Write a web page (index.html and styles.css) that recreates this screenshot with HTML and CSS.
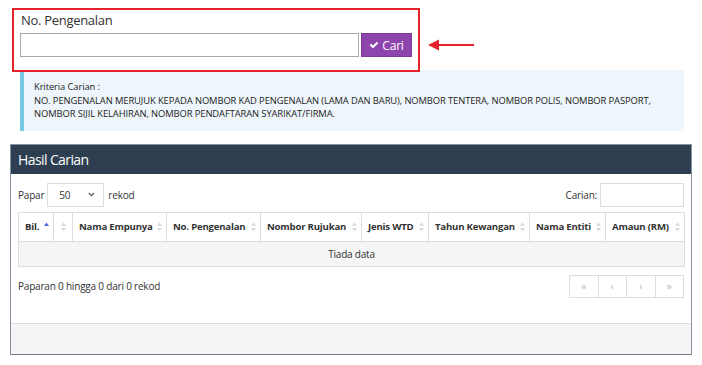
FILE: index.html
```html
<!DOCTYPE html>
<html>
<head>
    <title>Carian</title>
    <link rel="stylesheet" href="styles.css">
</head>
<body>

    <div class="search-row">
        <div class="search-box">
            <label class="search-label">No. Pengenalan</label>
            <div class="search-fields">
                <input type="text" class="search-input">
                <button class="btn-cari">
                    <svg width="10" height="10" viewBox="0 0 12 12"><path d="M0.8 6.4 L2.6 4.6 L4.7 6.7 L9.4 2 L11.2 3.8 L4.7 10.3 Z" fill="#fff"/></svg>
                    Cari
                </button>
            </div>
        </div>
        <svg class="arrow" width="50" height="12" viewBox="0 0 50 12">
            <path d="M0 6 L11 0.5 L11 11.5 Z" fill="#e2232b"/>
            <rect x="9" y="5" width="37" height="2" fill="#e2232b"/>
        </svg>
    </div>

    <div class="info-box">
        <div>Kriteria Carian :</div>
        <div>NO. PENGENALAN MERUJUK KEPADA NOMBOR KAD PENGENALAN (LAMA DAN BARU), NOMBOR TENTERA, NOMBOR POLIS, NOMBOR PASPORT, NOMBOR SIJIL KELAHIRAN, NOMBOR PENDAFTARAN SYARIKAT/FIRMA.</div>
    </div>

    <div class="panel">
        <div class="panel-heading">Hasil Carian</div>
        <div class="panel-body">
            <div class="controls">
                <div class="length">
                    Papar
                    <div class="fake-select">
                        <span>50</span>
                        <svg width="7" height="5" viewBox="0 0 7 5"><path d="M0.8 1 L3.5 3.7 L6.2 1" stroke="#555" stroke-width="1.1" fill="none"/></svg>
                    </div>
                    rekod
                </div>
                <div class="filter">
                    Carian:
                    <input type="text" class="filter-input">
                </div>
            </div>

            <table class="data-table">
                <colgroup>
                    <col style="width: 35px">
                    <col style="width: 19px">
                    <col style="width: 94px">
                    <col style="width: 94px">
                    <col style="width: 101px">
                    <col style="width: 67px">
                    <col style="width: 101px">
                    <col style="width: 76px">
                    <col style="width: 79px">
                </colgroup>
                <thead>
                    <tr>
                        <th class="th-asc">
                            <div class="th-inner">Bil.
                                <svg class="sort-up" width="5" height="5" viewBox="0 0 5 5"><path d="M0 4 L2.5 0.5 L5 4 Z" fill="#4a6fd6"/></svg>
                            </div>
                        </th>
                        <th class="th-blank">
                            <div class="th-inner">
                                <svg width="5" height="10" viewBox="0 0 5 10"><path d="M0 4 L2.5 0.5 L5 4 Z M0 6 L2.5 9.5 L5 6 Z" fill="#dadada"/></svg>
                            </div>
                        </th>
                        <th><div class="th-inner">Nama Empunya<svg width="5" height="10" viewBox="0 0 5 10"><path d="M0 4 L2.5 0.5 L5 4 Z M0 6 L2.5 9.5 L5 6 Z" fill="#dadada"/></svg></div></th>
                        <th><div class="th-inner">No. Pengenalan<svg width="5" height="10" viewBox="0 0 5 10"><path d="M0 4 L2.5 0.5 L5 4 Z M0 6 L2.5 9.5 L5 6 Z" fill="#dadada"/></svg></div></th>
                        <th><div class="th-inner">Nombor Rujukan<svg width="5" height="10" viewBox="0 0 5 10"><path d="M0 4 L2.5 0.5 L5 4 Z M0 6 L2.5 9.5 L5 6 Z" fill="#dadada"/></svg></div></th>
                        <th><div class="th-inner">Jenis WTD<svg width="5" height="10" viewBox="0 0 5 10"><path d="M0 4 L2.5 0.5 L5 4 Z M0 6 L2.5 9.5 L5 6 Z" fill="#dadada"/></svg></div></th>
                        <th><div class="th-inner">Tahun Kewangan<svg width="5" height="10" viewBox="0 0 5 10"><path d="M0 4 L2.5 0.5 L5 4 Z M0 6 L2.5 9.5 L5 6 Z" fill="#dadada"/></svg></div></th>
                        <th><div class="th-inner">Nama Entiti<svg width="5" height="10" viewBox="0 0 5 10"><path d="M0 4 L2.5 0.5 L5 4 Z M0 6 L2.5 9.5 L5 6 Z" fill="#dadada"/></svg></div></th>
                        <th><div class="th-inner">Amaun (RM)<svg width="5" height="10" viewBox="0 0 5 10"><path d="M0 4 L2.5 0.5 L5 4 Z M0 6 L2.5 9.5 L5 6 Z" fill="#dadada"/></svg></div></th>
                    </tr>
                </thead>
                <tbody>
                    <tr>
                        <td colspan="9" class="empty">Tiada data</td>
                    </tr>
                </tbody>
            </table>

            <div class="table-footer">
                <div class="table-info">Paparan 0 hingga 0 dari 0 rekod</div>
                <div class="pagination">
                    <span>&laquo;</span>
                    <span>&lsaquo;</span>
                    <span>&rsaquo;</span>
                    <span>&raquo;</span>
                </div>
            </div>
        </div>
        <div class="panel-footer"></div>
    </div>

</body>
</html>
```

FILE: styles.css
```css
body {
    margin: 0;
    padding: 0;
    background-color: #fff;
    font-family: "Open Sans", "DejaVu Sans", sans-serif;
    font-size: 10px;
    letter-spacing: -0.2px;
    color: #333;
}

/* kotak carian bertanda merah */
.search-row {
    display: flex;
    align-items: flex-start;
    margin: 8px 0 0 12px;
}

.search-box {
    position: relative;
    z-index: 1;
    width: 392px;
    border: 2px solid #e2232b;
    padding: 2px 6px 13px 6px;
}

.search-label {
    display: block;
    font-size: 13px;
    line-height: 16px;
    letter-spacing: -0.3px;
    color: #333;
    margin-left: 1px;
}

.search-fields {
    display: flex;
    gap: 2px;
    margin-top: 5px;
}

.search-input {
    box-sizing: border-box;
    width: 339px;
    height: 24px;
    border: 1px solid #a9a9a9;
    margin: 0;
    padding: 0 4px;
}

.btn-cari {
    box-sizing: border-box;
    width: 51px;
    height: 24px;
    margin: 0;
    background-color: #8e44ad;
    border: 1px solid #7d3c98;
    color: #fff;
    font-family: "Open Sans", sans-serif;
    font-size: 12px;
    letter-spacing: -0.2px;
    display: flex;
    align-items: center;
    justify-content: center;
    gap: 3px;
    padding: 0;
}

.arrow {
    margin: 31px 0 0 8px;
}

/* kriteria carian */
.info-box {
    margin: -2px 18px 0 20px;
    background-color: #eef6fb;
    border-left: 4px solid #76cbe0;
    padding: 10px;
    line-height: 13.5px;
    font-size: 9.4px;
    letter-spacing: -0.1px;
    color: #222;
}

/* panel hasil */
.panel {
    margin: 13px 10px 0 10px;
    border: 1px solid #8592a0;
    border-bottom-color: #6f7d8b;
}

.panel-heading {
    background-color: #2c3e50;
    color: #fff;
    font-size: 14px;
    letter-spacing: -0.6px;
    height: 29px;
    line-height: 29px;
    padding-left: 7px;
}

.panel-body {
    padding: 9px 7px 25px 7px;
}

.controls {
    display: flex;
    justify-content: space-between;
    align-items: center;
}

.length,
.filter {
    display: flex;
    align-items: center;
    gap: 4px;
}

.fake-select {
    box-sizing: border-box;
    width: 57px;
    height: 24px;
    border: 1px solid #ddd;
    display: flex;
    align-items: center;
    justify-content: space-between;
    padding: 0 8px 0 11px;
    margin-left: -1px;
}

.filter {
    gap: 3px;
}

.filter-input {
    box-sizing: border-box;
    width: 84px;
    height: 24px;
    border: 1px solid #ddd;
    margin: 0;
}

.data-table {
    width: 666px;
    table-layout: fixed;
    border-collapse: collapse;
    margin-top: 5px;
}

.data-table th {
    text-align: left;
    font-weight: bold;
    font-size: 9.6px;
    height: 29px;
    padding: 0 4px 0 6px;
    border: 1px solid #ddd;
    white-space: nowrap;
    color: #333;
    box-sizing: border-box;
}

.th-inner {
    display: flex;
    justify-content: space-between;
    align-items: center;
}

.th-asc {
    padding-right: 7px;
}

.th-asc .th-inner {
    align-items: flex-start;
}

.sort-up {
    margin-top: 2px;
}

.data-table th.th-blank {
    padding: 0;
}

.th-blank .th-inner {
    justify-content: center;
}

.data-table td.empty {
    text-align: center;
    height: 25px;
    padding: 0;
    box-sizing: border-box;
    background-color: #f5f5f5;
    border: 1px solid #ddd;
}

.table-footer {
    display: flex;
    justify-content: space-between;
    align-items: center;
    margin-top: 8px;
}

.pagination {
    display: flex;
}

.pagination span {
    box-sizing: border-box;
    width: 29.5px;
    height: 23px;
    border: 1px solid #ddd;
    margin-left: -1px;
    display: flex;
    align-items: center;
    justify-content: center;
    color: #b5b5b5;
    font-size: 10px;
}

.panel-footer {
    height: 30px;
    background-color: #f5f5f5;
    border-top: 1px solid #ddd;
}
```
